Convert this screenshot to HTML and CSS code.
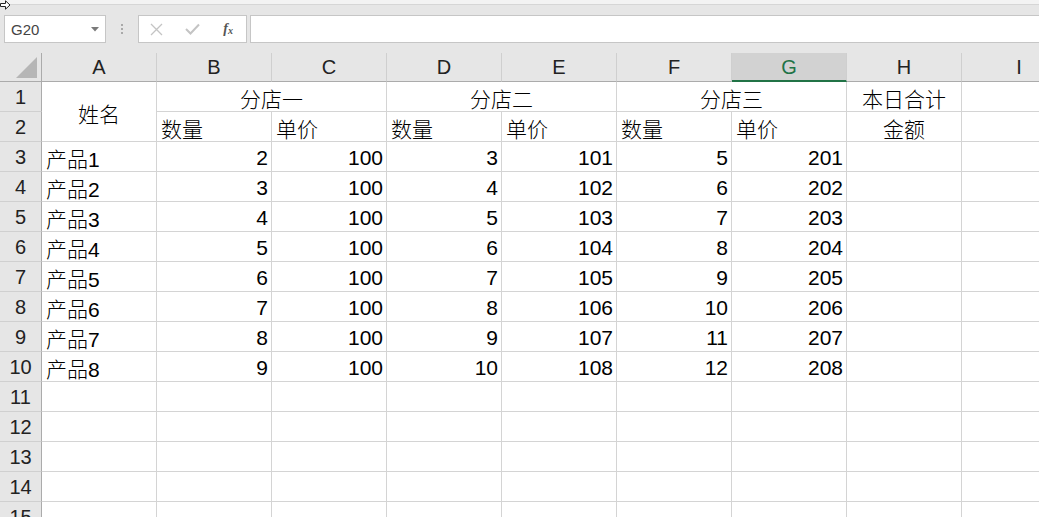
FILE: index.html
```html
<!DOCTYPE html>
<html lang="zh">
<head>
<meta charset="utf-8">
<title>Sheet</title>
<link rel="stylesheet" href="styles.css">
</head>
<body>
<div class="app">
  <div class="top-strip">
    <svg class="cursor" width="11" height="10" viewBox="0 0 11 10"><path d="M0.5 3.5 H5.5 V0.8 L10 5 L5.5 9.2 V6.5 H0.5 Z" fill="#fff" stroke="#222" stroke-width="1"/></svg>
  </div>
  <div class="formula-bar">
    <div class="name-box">
      <span class="name-text">G20</span>
      <svg class="dd" width="8" height="5" viewBox="0 0 8 5"><path d="M0 0 H8 L4 4.5 Z" fill="#7a7a7a"/></svg>
    </div>
    <div class="dots"><i></i><i></i><i></i></div>
    <div class="fn-box">
      <span class="slot"><svg width="13" height="13" viewBox="0 0 13 13"><path d="M1 1 L12 12 M12 1 L1 12" stroke="#c4c4c4" stroke-width="1.3" fill="none"/></svg></span>
      <span class="slot"><svg width="15" height="12" viewBox="0 0 15 12"><path d="M1 6 L5.5 10.5 L14 1.5" stroke="#c4c4c4" stroke-width="2" fill="none"/></svg></span>
      <span class="slot"><span class="fx">f<sub>x</sub></span></span>
    </div>
    <div class="formula-input"></div>
  </div>
  <div class="sheet">
    <div class="corner"><svg width="21" height="21" viewBox="0 0 21 21"><path d="M21 0 V21 H0 Z" fill="#b6b6b6"/></svg></div>
    <div class="ch">A</div><div class="ch">B</div><div class="ch">C</div><div class="ch">D</div><div class="ch">E</div><div class="ch">F</div><div class="ch sel">G</div><div class="ch">H</div><div class="ch">I</div>

    <div class="rh">1</div>
    <div class="c mid rspan">姓名</div>
    <div class="c mid span2">分店一</div>
    <div class="c mid span2">分店二</div>
    <div class="c mid span2">分店三</div>
    <div class="c mid">本日合计</div>
    <div class="c"></div>

    <div class="rh">2</div>
    <div class="c">数量</div><div class="c">单价</div>
    <div class="c">数量</div><div class="c">单价</div>
    <div class="c">数量</div><div class="c">单价</div>
    <div class="c mid">金额</div>
    <div class="c"></div>

    <div class="rh">3</div><div class="c">产品1</div><div class="c n">2</div><div class="c n">100</div><div class="c n">3</div><div class="c n">101</div><div class="c n">5</div><div class="c n">201</div><div class="c"></div><div class="c"></div>
    <div class="rh">4</div><div class="c">产品2</div><div class="c n">3</div><div class="c n">100</div><div class="c n">4</div><div class="c n">102</div><div class="c n">6</div><div class="c n">202</div><div class="c"></div><div class="c"></div>
    <div class="rh">5</div><div class="c">产品3</div><div class="c n">4</div><div class="c n">100</div><div class="c n">5</div><div class="c n">103</div><div class="c n">7</div><div class="c n">203</div><div class="c"></div><div class="c"></div>
    <div class="rh">6</div><div class="c">产品4</div><div class="c n">5</div><div class="c n">100</div><div class="c n">6</div><div class="c n">104</div><div class="c n">8</div><div class="c n">204</div><div class="c"></div><div class="c"></div>
    <div class="rh">7</div><div class="c">产品5</div><div class="c n">6</div><div class="c n">100</div><div class="c n">7</div><div class="c n">105</div><div class="c n">9</div><div class="c n">205</div><div class="c"></div><div class="c"></div>
    <div class="rh">8</div><div class="c">产品6</div><div class="c n">7</div><div class="c n">100</div><div class="c n">8</div><div class="c n">106</div><div class="c n">10</div><div class="c n">206</div><div class="c"></div><div class="c"></div>
    <div class="rh">9</div><div class="c">产品7</div><div class="c n">8</div><div class="c n">100</div><div class="c n">9</div><div class="c n">107</div><div class="c n">11</div><div class="c n">207</div><div class="c"></div><div class="c"></div>
    <div class="rh">10</div><div class="c">产品8</div><div class="c n">9</div><div class="c n">100</div><div class="c n">10</div><div class="c n">108</div><div class="c n">12</div><div class="c n">208</div><div class="c"></div><div class="c"></div>

    <div class="rh">11</div><div class="c"></div><div class="c"></div><div class="c"></div><div class="c"></div><div class="c"></div><div class="c"></div><div class="c"></div><div class="c"></div><div class="c"></div>
    <div class="rh">12</div><div class="c"></div><div class="c"></div><div class="c"></div><div class="c"></div><div class="c"></div><div class="c"></div><div class="c"></div><div class="c"></div><div class="c"></div>
    <div class="rh">13</div><div class="c"></div><div class="c"></div><div class="c"></div><div class="c"></div><div class="c"></div><div class="c"></div><div class="c"></div><div class="c"></div><div class="c"></div>
    <div class="rh">14</div><div class="c"></div><div class="c"></div><div class="c"></div><div class="c"></div><div class="c"></div><div class="c"></div><div class="c"></div><div class="c"></div><div class="c"></div>
    <div class="rh">15</div><div class="c"></div><div class="c"></div><div class="c"></div><div class="c"></div><div class="c"></div><div class="c"></div><div class="c"></div><div class="c"></div><div class="c"></div>
  </div>
</div>
</body>
</html>
```
FILE: styles.css
```css
html, body {
  margin: 0;
  padding: 0;
  background: #ffffff;
  overflow: hidden;
}
body {
  width: 1039px;
  height: 517px;
  font-family: "Liberation Sans", "Noto Sans CJK SC", sans-serif;
  color: #000;
}
.app {
  width: 1039px;
  height: 517px;
  overflow: hidden;
}
.top-strip {
  height: 4px;
  background: #f3f3f3;
  border-bottom: 1px solid #d6d6d6;
  position: relative;
}
.cursor {
  position: absolute;
  left: 0;
  top: 0;
}
.formula-bar {
  height: 48px;
  background: #e6e6e6;
  display: flex;
  align-items: flex-start;
  padding-top: 10px;
  box-sizing: border-box;
}
.name-box {
  margin-left: 4px;
  width: 102px;
  height: 28px;
  box-sizing: border-box;
  background: #fff;
  border: 1px solid #c6c6c6;
  display: flex;
  align-items: center;
  justify-content: space-between;
  padding: 0 6px 0 6px;
}
.name-text {
  font-size: 15px;
  color: #444;
}
.dd {
  margin-top: 1px;
}
.dots {
  width: 32px;
  height: 28px;
  display: flex;
  flex-direction: column;
  align-items: center;
  justify-content: center;
  gap: 2px;
}
.dots i {
  display: block;
  width: 2px;
  height: 2px;
  background: #a9a9a9;
}
.fn-box {
  width: 109px;
  height: 28px;
  box-sizing: border-box;
  background: #fff;
  border: 1px solid #c6c6c6;
  display: flex;
  align-items: center;
  padding: 0;
}
.slot {
  width: 36px;
  display: flex;
  align-items: center;
  justify-content: center;
}
.fx {
  font-family: "Liberation Serif", serif;
  font-style: italic;
  font-weight: bold;
  font-size: 14px;
  color: #555;
}
.fx sub {
  font-size: 10px;
  vertical-align: -1px;
}
.formula-input {
  margin-left: 3px;
  flex: 1;
  height: 28px;
  box-sizing: border-box;
  background: #fff;
  border: 1px solid #c6c6c6;
  border-right: none;
}
.sheet {
  display: grid;
  grid-template-columns: 42px repeat(9, 115px);
  grid-template-rows: 29px;
  grid-auto-rows: 30px;
  font-size: 21px;
}
.corner {
  background: #e6e6e6;
  border-right: 1px solid #ababab;
  border-bottom: 1px solid #ababab;
  box-sizing: border-box;
  display: flex;
  align-items: flex-end;
  justify-content: flex-end;
  padding: 0 4px 3px 0;
}
.ch {
  background: #e6e6e6;
  border-right: 1px solid #cfcfcf;
  border-bottom: 1px solid #ababab;
  box-sizing: border-box;
  display: flex;
  align-items: center;
  justify-content: center;
  font-size: 20px;
  color: #222;
  padding-top: 1px;
}
.ch.sel {
  background: #d2d2d2;
  color: #217346;
  border-bottom: 2px solid #217346;
  padding-top: 2px;
}
.rh {
  background: #e6e6e6;
  border-right: 1px solid #ababab;
  border-bottom: 1px solid #d0d0d0;
  box-sizing: border-box;
  display: flex;
  align-items: center;
  justify-content: center;
  font-size: 20px;
  color: #222;
  padding-top: 1px;
}
.c {
  border-right: 1px solid #d4d4d4;
  border-bottom: 1px solid #d4d4d4;
  box-sizing: border-box;
  display: flex;
  align-items: center;
  padding: 2px 3px 0 4px;
  white-space: nowrap;
  overflow: hidden;
  font-weight: 300;
}
.c.n {
  justify-content: flex-end;
}
.c.mid {
  justify-content: center;
  padding-left: 0;
  padding-right: 0;
}
.span2 {
  grid-column: span 2;
}
.rspan {
  grid-row: span 2;
}
```
